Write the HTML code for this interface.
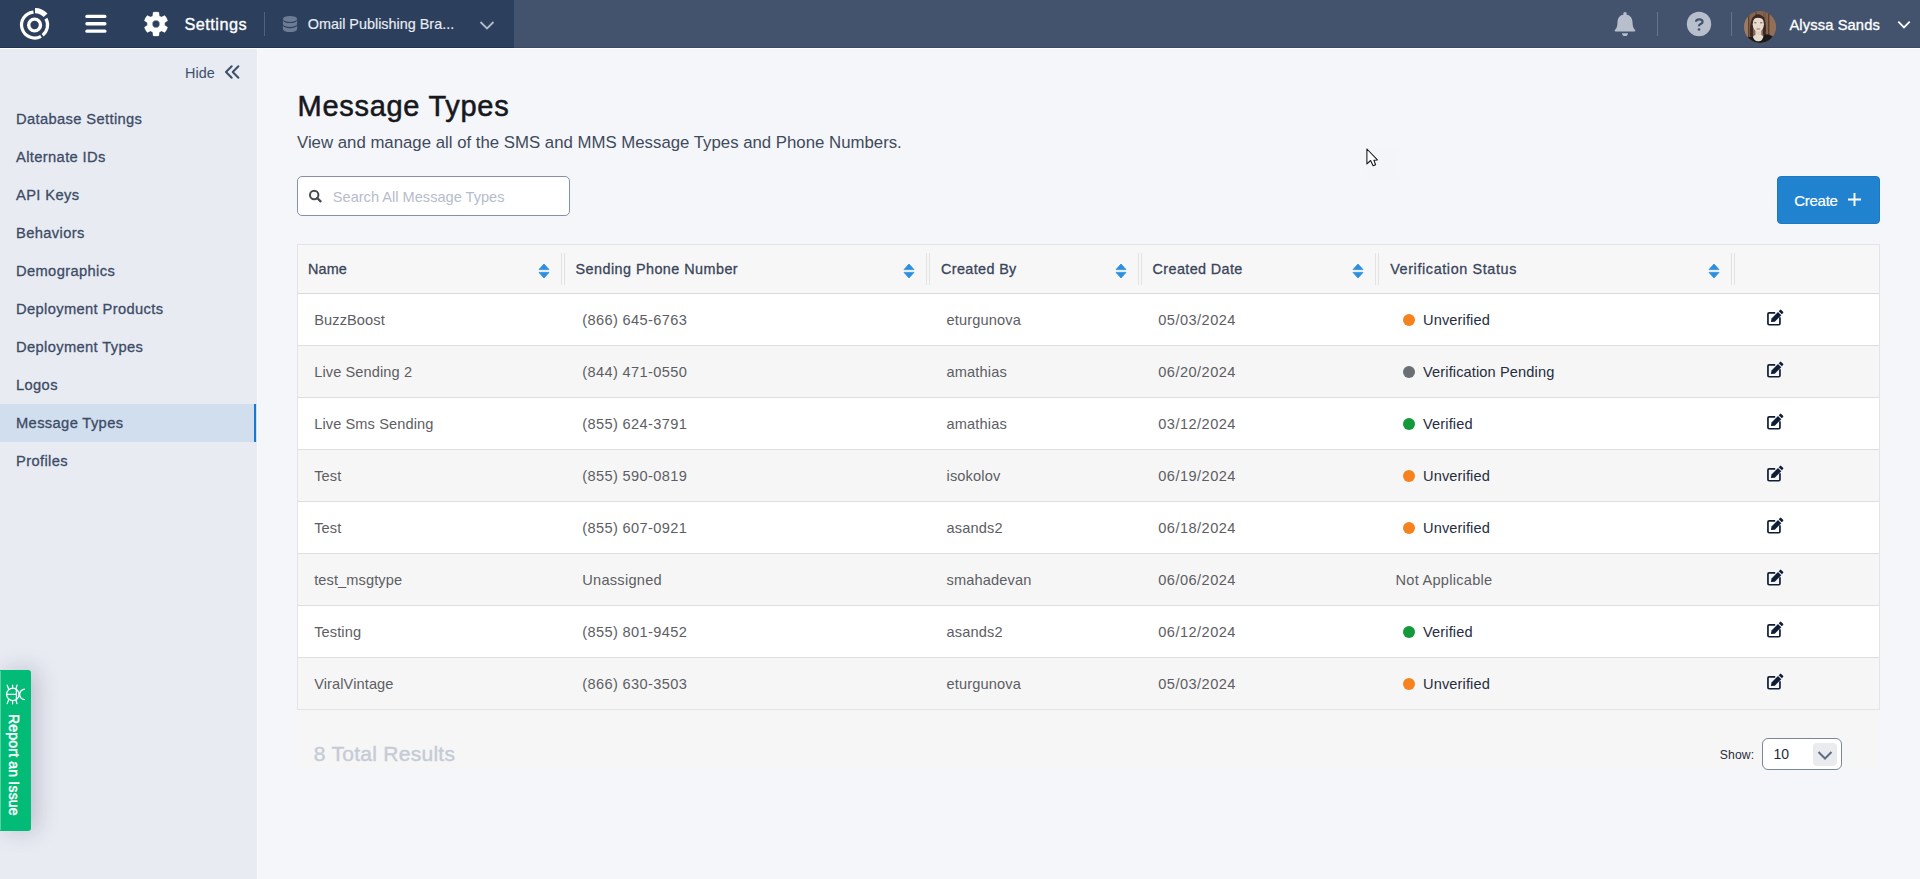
<!DOCTYPE html>
<html>
<head>
<meta charset="utf-8">
<style>
*{margin:0;padding:0;box-sizing:border-box;}
html,body{width:1920px;height:879px;overflow:hidden;background:#f5f6fa;font-family:"Liberation Sans",sans-serif;}
.a{position:absolute;white-space:nowrap;}
#hdr{position:absolute;left:0;top:0;width:1920px;height:48px;background:#43536e;}
#hdrL{position:absolute;left:0;top:0;width:514px;height:48px;background:#2c3f5d;}
#hdrline{position:absolute;left:0;top:47px;width:1920px;height:1px;background:#3c4a64;}
#hdrlineL{position:absolute;left:0;top:47px;width:514px;height:1px;background:#22344f;}
#side{position:absolute;left:0;top:49px;width:257px;height:830px;background:#e8ebf2;}
#sideedge{position:absolute;left:257px;top:49px;width:1px;height:830px;background:#f9fafc;}
.si{position:absolute;left:16px;font-size:14.7px;line-height:14.7px;-webkit-text-stroke:0.3px #3d4b66;color:#3d4b66;letter-spacing:0.37px;}
.t14{font-size:14px;line-height:14px;}
.th{top:262px;font-size:14.4px;line-height:14.4px;-webkit-text-stroke:0.3px #394559;color:#394559;}
.td{font-size:14.6px;line-height:14.6px;color:#5d5e63;}
.ts{font-size:14.6px;line-height:14.6px;color:#252e40;}
</style>
</head>
<body>
<!-- HEADER -->
<div id="hdr"></div>
<div id="hdrL"></div>
<div id="hdrline"></div><div id="hdrlineL"></div>
<div class="a" style="left:0;top:48px;width:1920px;height:1px;background:#fff;"></div>

<!-- logo -->
<svg class="a" style="left:15px;top:5px" width="40" height="40" viewBox="0 0 40 40">
  <g fill="none" stroke="#fff">
    <circle cx="19.6" cy="20" r="5.9" stroke-width="3.4"/>
    <!-- outer ring main arc: from -95deg counterclockwise to 65deg, and 62->-35 -->
    <path d="M18.5 7.05 A13 13 0 1 0 26.0 31.3" stroke-width="3.2"/>
    <path d="M27.6 30.2 A13 13 0 0 0 30.9 13.6" stroke-width="3.2"/>
    <path d="M20.0 5.6 A14.4 14.4 0 0 1 30.6 10.3" stroke-width="5.2"/>
  </g>
</svg>

<!-- hamburger -->
<svg class="a" style="left:85px;top:13px" width="22" height="22" viewBox="0 0 22 22">
  <g fill="#fff">
    <rect x="0.3" y="1.8" width="21.2" height="3.3" rx="1.6"/>
    <rect x="0.3" y="9.1" width="21.2" height="3.3" rx="1.6"/>
    <rect x="0.3" y="16.5" width="21.2" height="3.3" rx="1.6"/>
  </g>
</svg>

<!-- gear -->
<svg class="a" style="left:142.85px;top:10.8px" width="26" height="26" viewBox="0 0 26 26"><path d="M9.70 4.95 L10.10 1.25 A12.1 12.1 0 0 1 15.90 1.25 L16.30 4.95 A8.7 8.7 0 0 1 18.32 6.12 L21.72 4.61 A12.1 12.1 0 0 1 24.62 9.64 L21.62 11.83 A8.7 8.7 0 0 1 21.62 14.17 L24.62 16.36 A12.1 12.1 0 0 1 21.72 21.39 L18.32 19.88 A8.7 8.7 0 0 1 16.30 21.05 L15.90 24.75 A12.1 12.1 0 0 1 10.10 24.75 L9.70 21.05 A8.7 8.7 0 0 1 7.68 19.88 L4.28 21.39 A12.1 12.1 0 0 1 1.38 16.36 L4.38 14.17 A8.7 8.7 0 0 1 4.38 11.83 L1.38 9.64 A12.1 12.1 0 0 1 4.28 4.61 L7.68 6.12 A8.7 8.7 0 0 1 9.70 4.95Z M16.7 13 A3.7 3.7 0 1 0 9.3 13 A3.7 3.7 0 1 0 16.7 13Z" fill="#fff" fill-rule="evenodd" stroke="#fff" stroke-width="0.3" stroke-linejoin="round"/></svg>

<div class="a" style="left:184.4px;top:16px;font-size:16.3px;line-height:16.3px;-webkit-text-stroke:0.35px #fff;color:#fff;letter-spacing:0.5px;">Settings</div>
<div class="a" style="left:264px;top:12px;width:1px;height:24px;background:#53627c;"></div>

<!-- db icon -->
<svg class="a" style="left:282px;top:15px" width="16" height="18" viewBox="0 0 16 18">
  <g fill="#6d7c96">
    <ellipse cx="8" cy="3.9" rx="7.1" ry="3.0"/>
    <path d="M0.9 5.1 A7.1 3.0 0 0 0 15.1 5.1 V9.0 A7.1 3.0 0 0 1 0.9 9.0 Z"/>
    <path d="M0.9 10.2 A7.1 3.0 0 0 0 15.1 10.2 V14.1 A7.1 3.0 0 0 1 0.9 14.1 Z"/>
  </g>
</svg>
<div class="a" style="left:307.8px;top:17px;font-size:14.4px;line-height:14.4px;color:#e9edf3;-webkit-text-stroke:0.15px #e9edf3;">Omail Publishing Bra...</div>
<svg class="a" style="left:479px;top:19.6px" width="16" height="11" viewBox="0 0 16 11">
  <path d="M1.5 2 L8 8.5 L14.5 2" fill="none" stroke="#b3bccb" stroke-width="1.8"/>
</svg>

<!-- right header -->
<svg class="a" style="left:1613px;top:11px" width="24" height="26" viewBox="0 0 24 26">
  <g fill="#b8bfcc">
    <circle cx="12" cy="2.7" r="1.75"/>
    <path d="M12 3.6 C7.2 3.6 4.6 7 4.5 11.3 L4.3 13.8 C4.1 16.6 3 18 1.9 19.0 Q1.0 20.4 2.6 20.4 L21.4 20.4 Q23.0 20.4 22.1 19.0 C21 18 19.9 16.6 19.7 13.8 L19.5 11.3 C19.4 7 16.8 3.6 12 3.6 Z"/>
    <path d="M9.0 22.2 L15.0 22.2 Q14.6 25.1 12 25.1 Q9.4 25.1 9.0 22.2 Z"/>
  </g>
</svg>
<div class="a" style="left:1657px;top:12px;width:1px;height:24px;background:#66748c;"></div>
<svg class="a" style="left:1686px;top:11px" width="26" height="26" viewBox="0 0 26 26">
  <circle cx="13" cy="13" r="12.2" fill="#b8bfcc"/>
  <path d="M10.0 10.7 Q10.0 8.3 13.2 8.3 Q16.6 8.3 16.6 10.7 Q16.6 12.2 14.6 13.1 Q13.0 13.8 13.0 15.2" fill="none" stroke="#43536e" stroke-width="2.2"/>
  <circle cx="13.0" cy="18.5" r="1.35" fill="#43536e"/>
</svg>
<div class="a" style="left:1731px;top:12px;width:1px;height:24px;background:#66748c;"></div>

<!-- avatar -->
<svg class="a" style="left:1744px;top:10.7px" width="32" height="32" viewBox="0 0 32 32">
  <defs><clipPath id="av"><circle cx="16" cy="16" r="15.9"/></clipPath></defs>
  <g clip-path="url(#av)">
    <rect width="32" height="32" fill="#86654f"/>
    <rect x="0" y="0" width="4" height="32" fill="#9a7b62"/>
    <rect x="4" y="0" width="1.2" height="32" fill="#5d4233"/>
    <rect x="11" y="0" width="2" height="32" fill="#6e5140"/>
    <rect x="19" y="0" width="3" height="32" fill="#7a5a47"/>
    <rect x="24" y="0" width="1.3" height="32" fill="#5a3f31"/>
    <rect x="26" y="0" width="6" height="32" fill="#946f57"/>
    <path d="M6.2 25.5 C5.6 17 5.8 4.3 14 3.3 C21.6 3.6 22.6 14 21.8 23.5 L19 23.5 L19 12 L9 12 L9 25.5 Z" fill="#3d2722"/>
    <rect x="11.3" y="18" width="6" height="9" fill="#ddd0c2"/><ellipse cx="14.3" cy="27" rx="5.6" ry="3.4" fill="#e4dccd"/>
    <ellipse cx="14.3" cy="13.2" rx="5.6" ry="7.6" fill="#e8dace"/>
    <path d="M8.3 9 Q13 4.6 20.3 8.6 L20.5 6.5 Q14 2.5 8.4 6.8 Z" fill="#3d2722"/>
    <ellipse cx="11.3" cy="11.8" rx="1.3" ry="0.8" fill="#8f6f78"/>
    <ellipse cx="17.2" cy="11.8" rx="1.3" ry="0.8" fill="#8f6f78"/>
    <ellipse cx="14.3" cy="18" rx="2.2" ry="0.9" fill="#c99a95"/>
    <path d="M0 34 L0 28 Q3 25.8 8.8 25.3 Q9.6 30.4 14.3 30.4 Q19.2 30.4 19.8 23.6 Q24 22.3 28.5 25.3 L32 28 L32 34 Z" fill="#1b1a1b"/>
  </g>
</svg>
<div class="a" style="left:1789.4px;top:18px;font-size:14.7px;line-height:14.7px;-webkit-text-stroke:0.3px #fff;color:#fff;letter-spacing:0.13px;">Alyssa Sands</div>
<svg class="a" style="left:1896px;top:19px" width="16" height="11" viewBox="0 0 16 11">
  <path d="M2.3 2.7 L8 8.4 L13.7 2.7" fill="none" stroke="#fff" stroke-width="1.75"/>
</svg>

<!-- SIDEBAR -->
<div id="side"></div>
<div id="sideedge"></div>
<div class="a" style="left:185.1px;top:66px;font-size:14.4px;line-height:14.4px;color:#3f4f6b;">Hide</div>
<svg class="a" style="left:223px;top:64px" width="18" height="16" viewBox="0 0 18 16">
  <path d="M8.7 2.2 L3.0 8 L8.7 13.8 M15.4 2.2 L9.7 8 L15.4 13.8" fill="none" stroke="#3f4f6b" stroke-width="2.0" stroke-linecap="round" stroke-linejoin="round"/>
</svg>
<div class="a" style="left:0;top:404px;width:257px;height:38px;background:#d0deed;"></div>
<div class="a" style="left:254px;top:404px;width:2px;height:38px;background:#1779d2;"></div>
<div class="si a" style="top:112px">Database Settings</div>
<div class="si a" style="top:150px">Alternate IDs</div>
<div class="si a" style="top:188px">API Keys</div>
<div class="si a" style="top:226px">Behaviors</div>
<div class="si a" style="top:264px">Demographics</div>
<div class="si a" style="top:302px">Deployment Products</div>
<div class="si a" style="top:340px">Deployment Types</div>
<div class="si a" style="top:378px">Logos</div>
<div class="si a" style="top:416px">Message Types</div>
<div class="si a" style="top:454px">Profiles</div>

<!-- MAIN -->
<div class="a" style="left:297.5px;top:92px;font-size:29px;line-height:29px;-webkit-text-stroke:0.55px #16181d;color:#16181d;letter-spacing:0.72px;">Message Types</div>
<div class="a" style="left:297px;top:135px;font-size:16.8px;line-height:16.8px;color:#3f4a5b;letter-spacing:0px;">View and manage all of the SMS and MMS Message Types and Phone Numbers.</div>
<div class="a" style="left:297px;top:176px;width:273px;height:40px;background:#fff;border:1px solid #8592a6;border-radius:5px;"></div>
<svg class="a" style="left:306px;top:187px" width="18" height="18" viewBox="0 0 18 18"><circle cx="8.2" cy="8" r="4.2" fill="none" stroke="#464b52" stroke-width="2"/><path d="M11.2 11 L14.6 14.3" stroke="#464b52" stroke-width="2.3" stroke-linecap="round"/></svg>
<div class="a" style="left:332.8px;top:190px;font-size:14.6px;line-height:14.6px;color:#b5bccb;">Search All Message Types</div>
<div class="a" style="left:1777px;top:176px;width:103px;height:48px;background:#2183d0;border:1px solid #1d78c4;border-radius:4px;"></div>
<div class="a" style="left:1794.2px;top:193px;font-size:15px;line-height:15px;color:#fff;letter-spacing:-0.25px;-webkit-text-stroke:0.2px #fff;">Create</div>
<svg class="a" style="left:1848.1px;top:192.9px" width="13" height="13" viewBox="0 0 13 13"><path d="M6.5 0 V13 M0 6.5 H13" stroke="#fff" stroke-width="1.9"/></svg>
<div class="a" style="left:297px;top:244px;width:1583px;height:466px;background:#fff;border:1px solid #e2e4e8;"></div>
<div class="a" style="left:298px;top:245px;width:1581px;height:48px;background:#f7f7f7;"></div>
<div class="a" style="left:298px;top:293px;width:1581px;height:1px;background:#d9d9d9;"></div>
<div class="a" style="left:298px;top:294px;width:1581px;height:51px;background:#fff;"></div>
<div class="a" style="left:298px;top:345px;width:1581px;height:1px;background:#dedede;"></div>
<div class="a" style="left:298px;top:346px;width:1581px;height:51px;background:#f6f6f6;"></div>
<div class="a" style="left:298px;top:397px;width:1581px;height:1px;background:#dedede;"></div>
<div class="a" style="left:298px;top:398px;width:1581px;height:51px;background:#fff;"></div>
<div class="a" style="left:298px;top:449px;width:1581px;height:1px;background:#dedede;"></div>
<div class="a" style="left:298px;top:450px;width:1581px;height:51px;background:#f6f6f6;"></div>
<div class="a" style="left:298px;top:501px;width:1581px;height:1px;background:#dedede;"></div>
<div class="a" style="left:298px;top:502px;width:1581px;height:51px;background:#fff;"></div>
<div class="a" style="left:298px;top:553px;width:1581px;height:1px;background:#dedede;"></div>
<div class="a" style="left:298px;top:554px;width:1581px;height:51px;background:#f6f6f6;"></div>
<div class="a" style="left:298px;top:605px;width:1581px;height:1px;background:#dedede;"></div>
<div class="a" style="left:298px;top:606px;width:1581px;height:51px;background:#fff;"></div>
<div class="a" style="left:298px;top:657px;width:1581px;height:1px;background:#dedede;"></div>
<div class="a" style="left:298px;top:658px;width:1581px;height:51px;background:#f6f6f6;"></div>
<div class="a" style="left:561px;top:253px;width:1px;height:32px;background:#e3e3e3;"></div>
<div class="a" style="left:564px;top:253px;width:1px;height:32px;background:#e3e3e3;"></div>
<div class="a" style="left:926px;top:253px;width:1px;height:32px;background:#e3e3e3;"></div>
<div class="a" style="left:929px;top:253px;width:1px;height:32px;background:#e3e3e3;"></div>
<div class="a" style="left:1138px;top:253px;width:1px;height:32px;background:#e3e3e3;"></div>
<div class="a" style="left:1141px;top:253px;width:1px;height:32px;background:#e3e3e3;"></div>
<div class="a" style="left:1375px;top:253px;width:1px;height:32px;background:#e3e3e3;"></div>
<div class="a" style="left:1378px;top:253px;width:1px;height:32px;background:#e3e3e3;"></div>
<div class="a" style="left:1731px;top:253px;width:1px;height:32px;background:#e3e3e3;"></div>
<div class="a" style="left:1734px;top:253px;width:1px;height:32px;background:#e3e3e3;"></div>
<div class="a th" style="left:308px;letter-spacing:0.15px;">Name</div>
<div class="a th" style="left:575.5px;letter-spacing:0.45px;">Sending Phone Number</div>
<div class="a th" style="left:941px;letter-spacing:0.37px;">Created By</div>
<div class="a th" style="left:1152.6px;letter-spacing:0.37px;">Created Date</div>
<div class="a th" style="left:1390.2px;letter-spacing:0.61px;">Verification Status</div>
<svg class="a" style="left:537.5px;top:263px" width="12" height="16" viewBox="0 0 12 16"><path d="M6 1 L11 6.6 H1 Z M6 15 L11 9.4 H1 Z" fill="#2d8fe0" stroke="#2d8fe0" stroke-width="0.8" stroke-linejoin="round"/></svg>
<svg class="a" style="left:902.5px;top:263px" width="12" height="16" viewBox="0 0 12 16"><path d="M6 1 L11 6.6 H1 Z M6 15 L11 9.4 H1 Z" fill="#2d8fe0" stroke="#2d8fe0" stroke-width="0.8" stroke-linejoin="round"/></svg>
<svg class="a" style="left:1114.5px;top:263px" width="12" height="16" viewBox="0 0 12 16"><path d="M6 1 L11 6.6 H1 Z M6 15 L11 9.4 H1 Z" fill="#2d8fe0" stroke="#2d8fe0" stroke-width="0.8" stroke-linejoin="round"/></svg>
<svg class="a" style="left:1351.5px;top:263px" width="12" height="16" viewBox="0 0 12 16"><path d="M6 1 L11 6.6 H1 Z M6 15 L11 9.4 H1 Z" fill="#2d8fe0" stroke="#2d8fe0" stroke-width="0.8" stroke-linejoin="round"/></svg>
<svg class="a" style="left:1707.5px;top:263px" width="12" height="16" viewBox="0 0 12 16"><path d="M6 1 L11 6.6 H1 Z M6 15 L11 9.4 H1 Z" fill="#2d8fe0" stroke="#2d8fe0" stroke-width="0.8" stroke-linejoin="round"/></svg>
<div class="a td" style="left:314.2px;top:313px;letter-spacing:0.1px;">BuzzBoost</div>
<div class="a td" style="left:582.3px;top:313px;letter-spacing:0.36px;">(866) 645-6763</div>
<div class="a td" style="left:946.5px;top:313px;letter-spacing:0.15px;">eturgunova</div>
<div class="a td" style="left:1158.3px;top:313px;letter-spacing:0.45px;">05/03/2024</div>
<div class="a" style="left:1403px;top:314px;width:12px;height:12px;border-radius:6px;background:#f5821f;"></div>
<div class="a ts" style="left:1423px;top:313px;letter-spacing:0.12px;">Unverified</div>
<svg class="a" style="left:1755px;top:305px" width="32" height="26" viewBox="0 0 32 26"><path d="M20.2 7.85 H14.1 Q12.95 7.85 12.95 9 V18.6 Q12.95 19.75 14.1 19.75 H23.8 Q24.95 19.75 24.95 18.6 V12.3" fill="none" stroke="#0f1d38" stroke-width="1.7"/><path d="M15.9 16.9 L16.5 13.4 L23.0 6.9 L26.3 10.2 L19.8 16.7 Z" fill="#0f1d38"/><path d="M23.7 6.2 L25.0 4.9 Q25.6 4.3 26.2 4.9 L28.1 6.8 Q28.7 7.4 28.1 8.0 L26.8 9.3 Z" fill="#0f1d38"/></svg>
<div class="a td" style="left:314.2px;top:365px;letter-spacing:0.1px;">Live Sending 2</div>
<div class="a td" style="left:582.3px;top:365px;letter-spacing:0.36px;">(844) 471-0550</div>
<div class="a td" style="left:946.5px;top:365px;letter-spacing:0.15px;">amathias</div>
<div class="a td" style="left:1158.3px;top:365px;letter-spacing:0.45px;">06/20/2024</div>
<div class="a" style="left:1403px;top:366px;width:12px;height:12px;border-radius:6px;background:#6b6e72;"></div>
<div class="a ts" style="left:1423px;top:365px;letter-spacing:0.12px;">Verification Pending</div>
<svg class="a" style="left:1755px;top:357px" width="32" height="26" viewBox="0 0 32 26"><path d="M20.2 7.85 H14.1 Q12.95 7.85 12.95 9 V18.6 Q12.95 19.75 14.1 19.75 H23.8 Q24.95 19.75 24.95 18.6 V12.3" fill="none" stroke="#0f1d38" stroke-width="1.7"/><path d="M15.9 16.9 L16.5 13.4 L23.0 6.9 L26.3 10.2 L19.8 16.7 Z" fill="#0f1d38"/><path d="M23.7 6.2 L25.0 4.9 Q25.6 4.3 26.2 4.9 L28.1 6.8 Q28.7 7.4 28.1 8.0 L26.8 9.3 Z" fill="#0f1d38"/></svg>
<div class="a td" style="left:314.2px;top:417px;letter-spacing:0.1px;">Live Sms Sending</div>
<div class="a td" style="left:582.3px;top:417px;letter-spacing:0.36px;">(855) 624-3791</div>
<div class="a td" style="left:946.5px;top:417px;letter-spacing:0.15px;">amathias</div>
<div class="a td" style="left:1158.3px;top:417px;letter-spacing:0.45px;">03/12/2024</div>
<div class="a" style="left:1403px;top:418px;width:12px;height:12px;border-radius:6px;background:#11993a;"></div>
<div class="a ts" style="left:1423px;top:417px;letter-spacing:0.12px;">Verified</div>
<svg class="a" style="left:1755px;top:409px" width="32" height="26" viewBox="0 0 32 26"><path d="M20.2 7.85 H14.1 Q12.95 7.85 12.95 9 V18.6 Q12.95 19.75 14.1 19.75 H23.8 Q24.95 19.75 24.95 18.6 V12.3" fill="none" stroke="#0f1d38" stroke-width="1.7"/><path d="M15.9 16.9 L16.5 13.4 L23.0 6.9 L26.3 10.2 L19.8 16.7 Z" fill="#0f1d38"/><path d="M23.7 6.2 L25.0 4.9 Q25.6 4.3 26.2 4.9 L28.1 6.8 Q28.7 7.4 28.1 8.0 L26.8 9.3 Z" fill="#0f1d38"/></svg>
<div class="a td" style="left:314.2px;top:469px;letter-spacing:0.1px;">Test</div>
<div class="a td" style="left:582.3px;top:469px;letter-spacing:0.36px;">(855) 590-0819</div>
<div class="a td" style="left:946.5px;top:469px;letter-spacing:0.15px;">isokolov</div>
<div class="a td" style="left:1158.3px;top:469px;letter-spacing:0.45px;">06/19/2024</div>
<div class="a" style="left:1403px;top:470px;width:12px;height:12px;border-radius:6px;background:#f5821f;"></div>
<div class="a ts" style="left:1423px;top:469px;letter-spacing:0.12px;">Unverified</div>
<svg class="a" style="left:1755px;top:461px" width="32" height="26" viewBox="0 0 32 26"><path d="M20.2 7.85 H14.1 Q12.95 7.85 12.95 9 V18.6 Q12.95 19.75 14.1 19.75 H23.8 Q24.95 19.75 24.95 18.6 V12.3" fill="none" stroke="#0f1d38" stroke-width="1.7"/><path d="M15.9 16.9 L16.5 13.4 L23.0 6.9 L26.3 10.2 L19.8 16.7 Z" fill="#0f1d38"/><path d="M23.7 6.2 L25.0 4.9 Q25.6 4.3 26.2 4.9 L28.1 6.8 Q28.7 7.4 28.1 8.0 L26.8 9.3 Z" fill="#0f1d38"/></svg>
<div class="a td" style="left:314.2px;top:521px;letter-spacing:0.1px;">Test</div>
<div class="a td" style="left:582.3px;top:521px;letter-spacing:0.36px;">(855) 607-0921</div>
<div class="a td" style="left:946.5px;top:521px;letter-spacing:0.15px;">asands2</div>
<div class="a td" style="left:1158.3px;top:521px;letter-spacing:0.45px;">06/18/2024</div>
<div class="a" style="left:1403px;top:522px;width:12px;height:12px;border-radius:6px;background:#f5821f;"></div>
<div class="a ts" style="left:1423px;top:521px;letter-spacing:0.12px;">Unverified</div>
<svg class="a" style="left:1755px;top:513px" width="32" height="26" viewBox="0 0 32 26"><path d="M20.2 7.85 H14.1 Q12.95 7.85 12.95 9 V18.6 Q12.95 19.75 14.1 19.75 H23.8 Q24.95 19.75 24.95 18.6 V12.3" fill="none" stroke="#0f1d38" stroke-width="1.7"/><path d="M15.9 16.9 L16.5 13.4 L23.0 6.9 L26.3 10.2 L19.8 16.7 Z" fill="#0f1d38"/><path d="M23.7 6.2 L25.0 4.9 Q25.6 4.3 26.2 4.9 L28.1 6.8 Q28.7 7.4 28.1 8.0 L26.8 9.3 Z" fill="#0f1d38"/></svg>
<div class="a td" style="left:314.2px;top:573px;letter-spacing:0.1px;">test_msgtype</div>
<div class="a td" style="left:582.3px;top:573px;letter-spacing:0.25px;">Unassigned</div>
<div class="a td" style="left:946.5px;top:573px;letter-spacing:0.15px;">smahadevan</div>
<div class="a td" style="left:1158.3px;top:573px;letter-spacing:0.45px;">06/06/2024</div>
<div class="a td" style="left:1395.5px;top:573px;letter-spacing:0.26px;">Not Applicable</div>
<svg class="a" style="left:1755px;top:565px" width="32" height="26" viewBox="0 0 32 26"><path d="M20.2 7.85 H14.1 Q12.95 7.85 12.95 9 V18.6 Q12.95 19.75 14.1 19.75 H23.8 Q24.95 19.75 24.95 18.6 V12.3" fill="none" stroke="#0f1d38" stroke-width="1.7"/><path d="M15.9 16.9 L16.5 13.4 L23.0 6.9 L26.3 10.2 L19.8 16.7 Z" fill="#0f1d38"/><path d="M23.7 6.2 L25.0 4.9 Q25.6 4.3 26.2 4.9 L28.1 6.8 Q28.7 7.4 28.1 8.0 L26.8 9.3 Z" fill="#0f1d38"/></svg>
<div class="a td" style="left:314.2px;top:625px;letter-spacing:0.1px;">Testing</div>
<div class="a td" style="left:582.3px;top:625px;letter-spacing:0.36px;">(855) 801-9452</div>
<div class="a td" style="left:946.5px;top:625px;letter-spacing:0.15px;">asands2</div>
<div class="a td" style="left:1158.3px;top:625px;letter-spacing:0.45px;">06/12/2024</div>
<div class="a" style="left:1403px;top:626px;width:12px;height:12px;border-radius:6px;background:#11993a;"></div>
<div class="a ts" style="left:1423px;top:625px;letter-spacing:0.12px;">Verified</div>
<svg class="a" style="left:1755px;top:617px" width="32" height="26" viewBox="0 0 32 26"><path d="M20.2 7.85 H14.1 Q12.95 7.85 12.95 9 V18.6 Q12.95 19.75 14.1 19.75 H23.8 Q24.95 19.75 24.95 18.6 V12.3" fill="none" stroke="#0f1d38" stroke-width="1.7"/><path d="M15.9 16.9 L16.5 13.4 L23.0 6.9 L26.3 10.2 L19.8 16.7 Z" fill="#0f1d38"/><path d="M23.7 6.2 L25.0 4.9 Q25.6 4.3 26.2 4.9 L28.1 6.8 Q28.7 7.4 28.1 8.0 L26.8 9.3 Z" fill="#0f1d38"/></svg>
<div class="a td" style="left:314.2px;top:677px;letter-spacing:0.1px;">ViralVintage</div>
<div class="a td" style="left:582.3px;top:677px;letter-spacing:0.36px;">(866) 630-3503</div>
<div class="a td" style="left:946.5px;top:677px;letter-spacing:0.15px;">eturgunova</div>
<div class="a td" style="left:1158.3px;top:677px;letter-spacing:0.45px;">05/03/2024</div>
<div class="a" style="left:1403px;top:678px;width:12px;height:12px;border-radius:6px;background:#f5821f;"></div>
<div class="a ts" style="left:1423px;top:677px;letter-spacing:0.12px;">Unverified</div>
<svg class="a" style="left:1755px;top:669px" width="32" height="26" viewBox="0 0 32 26"><path d="M20.2 7.85 H14.1 Q12.95 7.85 12.95 9 V18.6 Q12.95 19.75 14.1 19.75 H23.8 Q24.95 19.75 24.95 18.6 V12.3" fill="none" stroke="#0f1d38" stroke-width="1.7"/><path d="M15.9 16.9 L16.5 13.4 L23.0 6.9 L26.3 10.2 L19.8 16.7 Z" fill="#0f1d38"/><path d="M23.7 6.2 L25.0 4.9 Q25.6 4.3 26.2 4.9 L28.1 6.8 Q28.7 7.4 28.1 8.0 L26.8 9.3 Z" fill="#0f1d38"/></svg>
<div class="a" style="left:297px;top:710px;width:1581px;height:59px;background:#f6f6f7;border-radius:0 0 6px 6px;"></div>
<div class="a" style="left:313.8px;top:743px;font-size:21px;line-height:21px;letter-spacing:0.27px;-webkit-text-stroke:0.4px #c5cbd6;color:#c5cbd6;">8 Total Results</div>
<div class="a" style="left:1719.8px;top:749px;font-size:12.2px;line-height:12.2px;color:#2a2d3a;letter-spacing:0.1px;">Show:</div>
<div class="a" style="left:1762px;top:738px;width:80px;height:32px;background:#fff;border:1px solid #7b8696;border-radius:6px;"></div>
<div class="a" style="left:1773.5px;top:747px;font-size:14px;line-height:14px;color:#1f2a3a;">10</div>
<div class="a" style="left:1813px;top:743px;width:24px;height:23px;background:#e9ebef;border-radius:4px;"></div>
<svg class="a" style="left:1816px;top:749px" width="18" height="12" viewBox="0 0 18 12"><path d="M2.5 3 L9 9.5 L15.5 3" fill="none" stroke="#5f6e85" stroke-width="2"/></svg>
<div class="a" style="left:1366px;top:148px;width:32px;height:32px;background:#f4f5f9;"></div>
<svg class="a" style="left:1364px;top:146px" width="18" height="24" viewBox="0 0 18 24"><path d="M2.9 3.0 V17.9 L6.6 14.5 L9.1 19.8 L11.6 18.8 L9.9 14.2 L13.4 13.9 Z" fill="#fff" stroke="#15161a" stroke-width="1.05" stroke-linejoin="round"/></svg>
<div class="a" style="left:0;top:670px;width:30.5px;height:161px;background:#02bb77;border-radius:0 3px 3px 0;box-shadow:6px 0 22px rgba(30,40,70,0.22);"></div>
<div class="a" style="left:0;top:671px;width:1px;height:159px;background:#5cd0a4;"></div>
<svg class="a" style="left:0;top:680px" width="30" height="30" viewBox="0 0 30 30"><g fill="none" stroke="#fff" stroke-width="1.25" stroke-linecap="round"><circle cx="12.8" cy="14.4" r="6.2"/><path d="M16.4 9.3 V19.5 M6.8 14.4 H16.4"/><path d="M24.4 9.2 Q19.7 10.4 19.7 14.4 Q19.7 18.4 24.4 19.6"/><path d="M7.2 5.2 L8.5 8.7 M12.6 5.0 V8.2 M17.0 5.2 L16.0 8.6 M7.2 23.6 L8.5 20.1 M12.6 23.8 V20.6 M17.0 23.6 L16.0 20.2"/></g></svg>
<div class="a" style="left:8px;top:713.5px;font-size:14px;line-height:14px;-webkit-text-stroke:0.45px #fff;color:#fff;letter-spacing:0.2px;transform-origin:0 0;transform:translate(13px,0) rotate(90deg);">Report an Issue</div>

</body>
</html>
